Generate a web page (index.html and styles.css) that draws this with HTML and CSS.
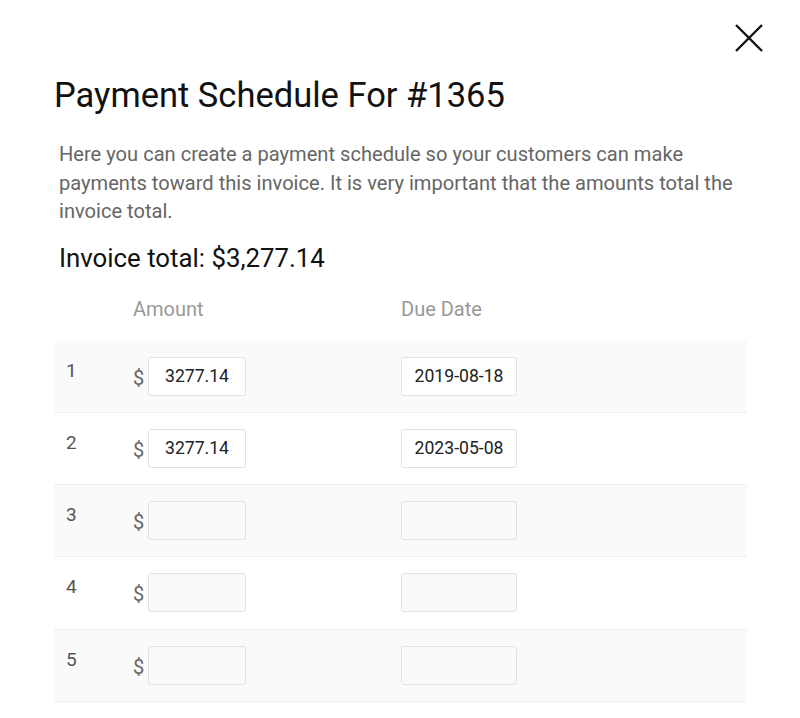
FILE: index.html
```html
<!DOCTYPE html>
<html lang="en">
<head>
  <meta charset="UTF-8" />
  <meta name="viewport" content="width=device-width, initial-scale=1.0"/>
  <title>Payment Schedule</title>
  <link rel="stylesheet" href="styles.css">
</head>
<body>
  <div class="modal">
    <div class="modal-top">
      <button class="close-btn" title="Close">
        <svg width="28" height="28" viewBox="0 0 28 28">
          <path d="M1 1 L27 27 M27 1 L1 27" stroke="#111" stroke-width="2.4" fill="none"/>
        </svg>
      </button>
    </div>

    <h1>Payment Schedule For #1365</h1>
    <p class="intro">
      Here you can create a payment schedule so your customers can make
      payments toward this invoice. It is very important that the amounts total the
      invoice total.
    </p>
    <div class="invoice-total">Invoice total: $3,277.14</div>

    <!-- Schedule table -->
    <div class="schedule">
      <div class="schedule-head">
        <span></span>
        <span>Amount</span>
        <span>Due Date</span>
      </div>

      <div class="schedule-row">
        <span class="num">1</span>
        <span class="amount"><span class="cur">$</span><input class="amount-input filled" type="text" value="3277.14"></span>
        <span><input class="date-input filled" type="text" value="2019-08-18"></span>
      </div>
      <div class="schedule-row">
        <span class="num">2</span>
        <span class="amount"><span class="cur">$</span><input class="amount-input filled" type="text" value="3277.14"></span>
        <span><input class="date-input filled" type="text" value="2023-05-08"></span>
      </div>
      <div class="schedule-row">
        <span class="num">3</span>
        <span class="amount"><span class="cur">$</span><input class="amount-input" type="text"></span>
        <span><input class="date-input" type="text"></span>
      </div>
      <div class="schedule-row">
        <span class="num">4</span>
        <span class="amount"><span class="cur">$</span><input class="amount-input" type="text"></span>
        <span><input class="date-input" type="text"></span>
      </div>
      <div class="schedule-row">
        <span class="num">5</span>
        <span class="amount"><span class="cur">$</span><input class="amount-input" type="text"></span>
        <span><input class="date-input" type="text"></span>
      </div>
    </div>
  </div>
</body>
</html>
```

FILE: styles.css
```css
:root {
  --text: #111;
  --muted: #666;
  --light: #999;
  --row-alt: #fafafa;
  --line: #efefef;
  --input-border: #e2e2e2;
}
body {
  margin: 0;
  background: #fff;
  font-family: Roboto, 'Noto Sans', Arial, sans-serif;
  color: var(--text);
}
.modal {
  padding: 24px 53px 20px 54px;
}
.modal-top {
  display: flex;
  justify-content: flex-end;
  margin-right: -16px;
}
.close-btn {
  background: none;
  border: none;
  padding: 0;
  width: 28px;
  height: 28px;
  cursor: pointer;
}
.close-btn svg {
  display: block;
}
h1 {
  margin: 23px 0 0 0;
  font-size: 34.5px;
  font-weight: 400;
  line-height: 40px;
}
.intro {
  margin: 25px 0 0 0;
  padding-left: 5px;
  font-size: 20.1px;
  line-height: 28.5px;
  color: var(--muted);
}
.invoice-total {
  margin-top: 17px;
  padding-left: 5px;
  font-size: 25.8px;
  line-height: 30px;
}
.schedule {
  margin-top: 17px;
}
.schedule-head,
.schedule-row {
  display: grid;
  grid-template-columns: 79px 268px 1fr;
  align-items: center;
}
.schedule-head {
  height: 38px;
  padding-bottom: 13px;
  font-size: 20px;
  color: var(--light);
}
.schedule-row {
  box-sizing: border-box;
  height: 72.25px;
  border-bottom: 1px solid var(--line);
}
.schedule-row:first-of-type {
  border-top: 1px solid var(--line);
}
.schedule-row:nth-child(even) {
  background: var(--row-alt);
}
.num {
  padding-left: 12px;
  font-size: 19px;
  color: #555;
  align-self: start;
  margin-top: 18px;
}
.amount {
  display: flex;
  align-items: center;
}
.cur {
  font-size: 20px;
  color: #666;
  width: 15px;
  margin-top: 3px;
}
input {
  box-sizing: border-box;
  height: 39px;
  border: 1px solid var(--input-border);
  border-radius: 3px;
  background: var(--row-alt);
  font-family: Roboto, Arial, sans-serif;
  font-size: 17.6px;
  color: #222;
  text-align: center;
  padding: 0;
}
input.filled {
  background: #fff;
}
.amount-input {
  width: 98px;
}
.date-input {
  width: 116px;
}
```
